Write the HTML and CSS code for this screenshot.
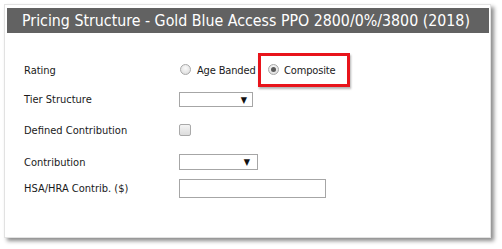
FILE: index.html
```html
<!DOCTYPE html>
<html>
<head>
<meta charset="utf-8">
<link rel="stylesheet" href="styles.css">
</head>
<body>
<div class="panel">
  <div class="header">Pricing Structure - Gold Blue Access PPO 2800/0%/3800 (2018)</div>
  <div class="form">
    <div class="label">Rating</div>
    <div class="control rating">
      <label class="opt first"><span class="radio"></span><span>Age Banded</span></label>
      <label class="opt highlight"><span class="radio checked"></span><span>Composite</span></label>
    </div>

    <div class="label">Tier Structure</div>
    <div class="control"><span class="select tier"><span class="arrow">▼</span></span></div>

    <div class="label">Defined Contribution</div>
    <div class="control"><span class="checkbox"></span></div>

    <div class="label">Contribution</div>
    <div class="control"><span class="select contrib"><span class="arrow">▼</span></span></div>

    <div class="label">HSA/HRA Contrib. ($)</div>
    <div class="control"><span class="textbox"></span></div>
  </div>
</div>
</body>
</html>
```

FILE: styles.css
```css
html, body {
  margin: 0;
  padding: 0;
  background: #fff;
}
body {
  width: 502px;
  height: 249px;
  overflow: hidden;
}
.panel {
  margin: 4px 0 0 4px;
  width: 487px;
  height: 234px;
  border: 1px solid #e2e2e2;
  padding: 3px 1px 0 2px;
  box-sizing: border-box;
  background: #fff;
  box-shadow: 3px 3px 4px rgba(0,0,0,0.45);
}
.header {
  height: 25px;
  background: #626262;
  color: #fff;
  font-family: "DejaVu Sans Condensed", "DejaVu Sans", sans-serif;
  font-stretch: semi-condensed;
  font-size: 15.8px;
  line-height: 25px;
  padding-left: 15px;
  white-space: nowrap;
  overflow: hidden;
}
.form {
  display: grid;
  grid-template-columns: 155px 1fr;
  grid-template-rows: 30px 29px 32px 32px 21px;
  margin-top: 22px;
  padding-left: 17px;
  font-family: "DejaVu Sans Condensed", "DejaVu Sans", sans-serif;
  font-stretch: semi-condensed;
  font-size: 11px;
  color: #1a1a1a;
}
.label, .control {
  display: flex;
  align-items: center;
}
.opt {
  display: flex;
  align-items: center;
  gap: 6px;
}
.opt.first {
  width: 79px;
  box-sizing: border-box;
  padding-left: 1px;
  letter-spacing: -0.15px;
}
.highlight {
  width: 92px;
  height: 34px;
  box-sizing: border-box;
  border: 3px solid #e8141b;
  padding-left: 7px;
  gap: 5px;
  letter-spacing: -0.15px;
  box-shadow: 1px 2px 2px rgba(0,0,0,0.3);
}
.radio {
  width: 11px;
  height: 11px;
  border-radius: 50%;
  box-sizing: border-box;
  border: 1px solid #a9a9a9;
  background: radial-gradient(circle at 50% 35%, #fafafa 0%, #e6e6e6 60%, #d4d4d4 100%);
  position: relative;
  margin-top: -2px;
  flex: none;
}
.radio.checked::after {
  content: "";
  position: absolute;
  left: 2px;
  top: 2px;
  width: 5px;
  height: 5px;
  border-radius: 50%;
  background: #5a5a5a;
}
.select {
  height: 16px;
  box-sizing: border-box;
  border: 1px solid #a6a6a6;
  background: #fff;
  display: flex;
  align-items: center;
  justify-content: flex-end;
  font-size: 9px;
  color: #111;
}
.select.tier {
  width: 74px;
  height: 15px;
  padding-right: 5px;
}
.select.contrib {
  width: 79px;
  padding-right: 7px;
}
.checkbox {
  width: 12px;
  height: 12px;
  box-sizing: border-box;
  border: 1px solid #a9a9a9;
  border-radius: 2px;
  background: linear-gradient(#f4f4f4, #dcdcdc);
}
.textbox {
  width: 147px;
  height: 19px;
  box-sizing: border-box;
  border: 1px solid #a6a6a6;
  background: #fff;
}
```
